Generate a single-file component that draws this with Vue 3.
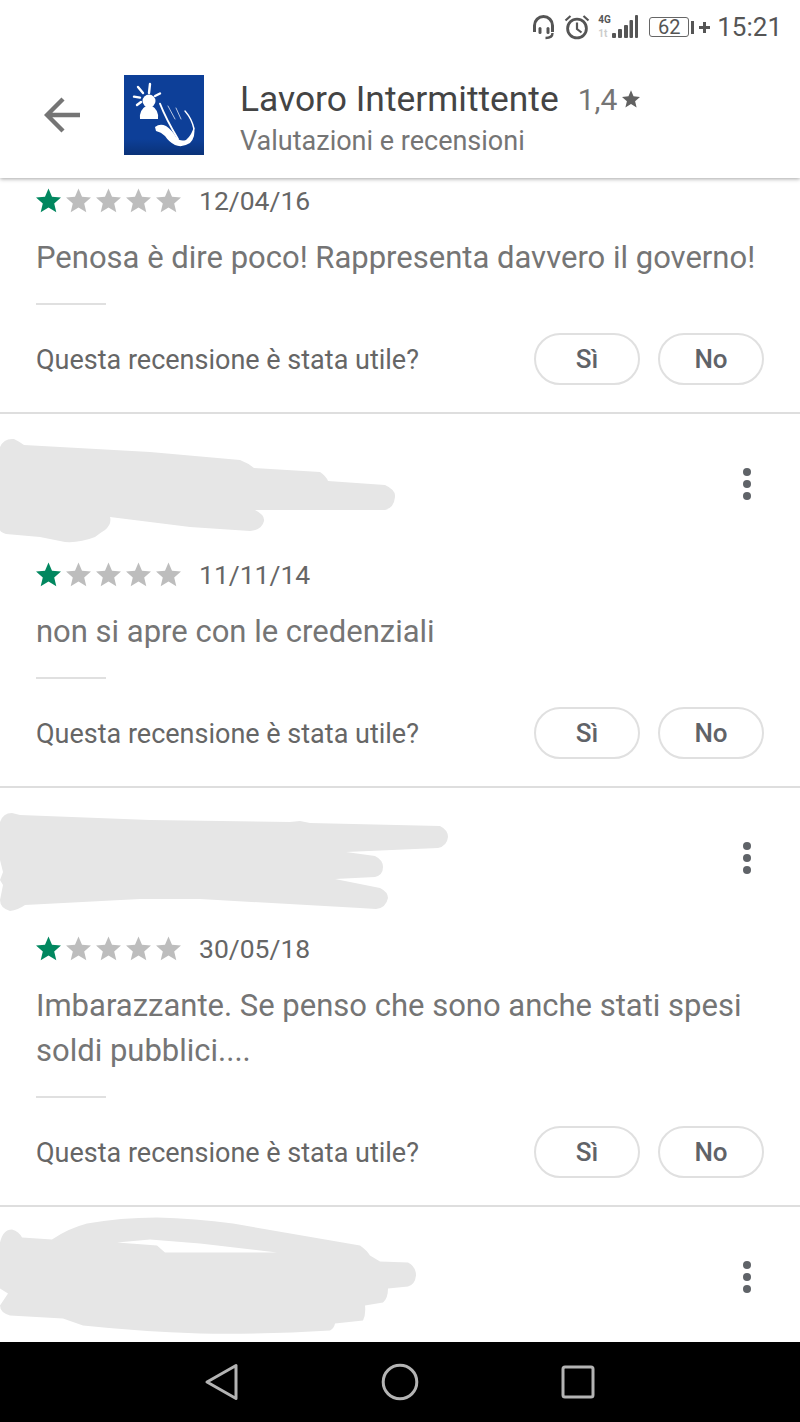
<script setup>
const reviews = [
  { id: 1, date: '12/04/16', lines: 'Penosa è dire poco! Rappresenta davvero il governo!' },
  {
    id: 2,
    date: '11/11/14',
    lines: 'non si apre con le credenziali',
    viewBox: '0 414 400 140',
    width: 400,
    blot: 'M0 447Q4 438 14 439Q20 442 24 445L150 452L240 460Q248 463 254 468L320 472Q326 476 328 481L385 485Q396 490 395 497Q394 508 385 510L255 510Q265 515 264 521Q262 530 250 531L190 527L110 517Q112 524 105 530Q100 533 95 537Q80 543 65 542L40 537L6 534Q0 532 0 530Z'
  },
  {
    id: 3,
    date: '30/05/18',
    lines: 'Imbarazzante. Se penso che sono anche stati spesi soldi pubblici....',
    viewBox: '0 788 460 140',
    width: 460,
    blot: 'M0 822Q3 813 12 813L20 815L150 820L290 822L300 821L310 823L440 826Q448 830 448 837Q447 846 438 848L346 852L375 856Q383 860 383 867Q383 875 375 877L335 879L380 888Q388 892 388 898Q386 908 376 909L360 908L200 899L140 899L25 905Q18 910 10 911Q0 908 0 900L3 885L0 880L3 872L0 860Z'
  },
  {
    id: 4,
    date: '',
    lines: '',
    viewBox: '0 1206.500 440 140',
    width: 440,
    blot: 'M0 1242Q3 1229 12 1229Q19 1231 22 1237L52 1239Q68 1228 87 1223Q120 1217 157 1217Q195 1218 233 1223L360 1245Q367 1250 370 1255L380 1261L408 1262Q416 1266 416 1275Q415 1284 408 1286L388 1288Q388 1298 383 1302L365 1305Q366 1314 363 1320L335 1323Q334 1328 330 1330Q265 1334 200 1333Q140 1331 83 1325L63 1318L10 1315Q0 1312 0 1305L8 1293L0 1288ZM117 1242L150 1239L200 1243L277 1252L165 1252L157 1245Z'
  }
]
const star = 'M12.5 0.5L16 8.8L25 9.6L18.2 15.5L20.3 24.3L12.5 19.6L4.7 24.3L6.8 15.5L0 9.6L9 8.8Z'
</script>

<template>
  <div class="screen">
    <header class="appbar">
      <div class="status">
        <svg class="ic-head" width="24" height="26" viewBox="0 0 24 26" fill="none" stroke="#555" stroke-width="3">
          <path d="M2.500 18V11.500a9 9 0 0 1 18 0V18" />
          <path d="M20.500 19c0 3-2 5-7 5" stroke-width="2.400" />
          <rect x="6.500" y="13" width="3" height="7" rx="1.500" fill="#555" stroke="none" />
          <rect x="14.500" y="13" width="3" height="7" rx="1.500" fill="#555" stroke="none" />
        </svg>
        <svg class="ic-alarm" width="26" height="26" viewBox="0 0 26 26" fill="none" stroke="#555" stroke-width="2.800">
          <circle cx="13" cy="14.500" r="9.400" />
          <path d="M13 8.500V15l4.500 3.500" stroke-width="2.200" />
          <path d="M1.500 6.500L6.500 2M24.500 6.500L19.500 2" stroke-width="2.200" />
        </svg>
        <div class="net">
          <span class="net-4g">4G</span>
          <span class="net-1">1t</span>
        </div>
        <svg class="ic-signal" width="26" height="24" viewBox="0 0 26 24" fill="#555">
          <rect x="0" y="18" width="4" height="5" rx="1" />
          <rect x="6" y="14" width="4" height="9" rx="1" />
          <rect x="12" y="10" width="4" height="13" rx="1" />
          <rect x="17.500" y="5" width="3.500" height="18" rx="1" />
          <rect x="23" y="0" width="3" height="23" rx="1" />
        </svg>
        <div class="battery"><span>62</span></div>
        <i class="nub"></i>
        <svg class="ic-plus" width="11" height="11" viewBox="0 0 11 11" fill="#555">
          <path d="M4 0h3v4h4v3H7v4H4V7H0V4h4z" />
        </svg>
        <span class="time">15:21</span>
      </div>
      <div class="titlebar">
        <svg class="back" width="38" height="38" viewBox="0 0 38 38" fill="none" stroke="#757575" stroke-width="4.400">
          <path d="M36 19H4M19 3L3 19l16 16" />
        </svg>
        <svg class="logo" width="80" height="80" viewBox="0 0 80 80">
          <defs>
            <linearGradient id="logoBg" x1="0" y1="0" x2="0" y2="1">
              <stop offset="0.800" stop-color="#0d3f98" />
              <stop offset="1" stop-color="#0a3278" />
            </linearGradient>
          </defs>
          <rect width="80" height="80" fill="url(#logoBg)" />
          <g fill="#fff" stroke="none">
            <circle cx="25" cy="26" r="6.500" />
            <path d="M16 44Q15 35 22 31H28Q35 35 34 44Z" />
            <path d="M31 52Q36 48 42 51Q48 55 52 62Q56 67 62 65Q68 60 70 51Q72 62 66 68Q58 73 51 70Q45 67 41 61Q37 57 32 56Z" />
          </g>
          <g fill="none" stroke="#fff" stroke-linecap="round">
            <path d="M14 12L19 18M26 9L25 18M36 18.500L31 21M10 21.600L16 22.600M13 30L17 27" stroke-width="2.400" />
            <path d="M36 28.600Q42 44 54 64" stroke-width="1.800" />
            <path d="M61 36Q68 44 70 54" stroke-width="1.400" />
            <path d="M44 31L51 44M52 33L57 44" stroke-width="1" stroke-opacity="0.700" />
          </g>
        </svg>
        <div class="titles">
          <div class="title-row">
            <span class="title">Lavoro Intermittente</span>
            <span class="rating">1,4</span>
            <svg width="18" height="18" viewBox="0 0 25 25" fill="#616161"><path :d="star" /></svg>
          </div>
          <div class="subtitle">Valutazioni e recensioni</div>
        </div>
      </div>
    </header>

    <main class="list">
      <article v-for="r in reviews" :key="r.id" class="card" :class="{ first: r.id === 1 }">
        <div v-if="r.blot" class="head">
          <svg :width="r.width" height="140" :viewBox="r.viewBox"><path :d="r.blot" fill="#e6e6e6" fill-rule="evenodd" /></svg>
          <div class="kebab"><i></i><i></i><i></i></div>
        </div>
        <template v-if="r.date">
          <div class="meta">
            <svg v-for="n in 5" :key="n" width="25" height="25" viewBox="0 0 25 25" :fill="n === 1 ? '#01875f' : '#bdbdbd'"><path :d="star" /></svg>
            <span class="date">{{ r.date }}</span>
          </div>
          <p class="body">{{ r.lines }}</p>
          <div class="rule"></div>
          <div class="actions">
            <span class="question">Questa recensione è stata utile?</span>
            <span class="btn">Sì</span>
            <span class="btn">No</span>
          </div>
        </template>
      </article>
    </main>

    <nav class="navbar">
      <svg width="40" height="40" viewBox="0 0 40 40" fill="none" stroke="#b4b4b4" stroke-width="3" stroke-linejoin="round"><path d="M34 3.500V36.500L5 20Z" /></svg>
      <svg width="40" height="40" viewBox="0 0 40 40" fill="none" stroke="#b4b4b4" stroke-width="3"><circle cx="20" cy="20" r="16.800" /></svg>
      <svg width="40" height="40" viewBox="0 0 40 40" fill="none" stroke="#b4b4b4" stroke-width="3" stroke-linejoin="round"><rect x="5" y="5" width="30" height="30" rx="2" /></svg>
    </nav>
  </div>
</template>

<style scoped>
.screen {
  width: 800px;
  height: 1422px;
  display: flex;
  flex-direction: column;
  overflow: hidden;
  background: #fff;
  font-family: Roboto, "Liberation Sans", sans-serif;
  color: #5f6368;
}
.appbar {
  height: 178px;
  flex: none;
  background: #fff;
  box-shadow: 0 1px 4px rgba(0, 0, 0, 0.35);
  position: relative;
  z-index: 2;
}
.status {
  height: 54px;
  display: flex;
  align-items: center;
  justify-content: flex-end;
  padding-right: 18px;
  color: #555;
}
.ic-head { margin-right: 8px; }
.ic-alarm { margin-right: 8px; }
.net {
  width: 14px;
  height: 24px;
  display: flex;
  flex-direction: column;
  justify-content: space-between;
  font-size: 10px;
  line-height: 10px;
  font-weight: 700;
}
.net-1 { color: #ccc; }
.ic-signal { margin-right: 11px; }
.battery {
  width: 40px;
  height: 20px;
  box-sizing: border-box;
  border: 1.500px solid #666;
  border-radius: 3px;
  display: flex;
  align-items: center;
  justify-content: center;
  font-size: 20px;
}
.nub {
  width: 3px;
  height: 13px;
  margin: 0 5px 0 2px;
  background: #555;
}
.ic-plus { margin-right: 7px; }
.time {
  font-size: 26px;
  color: #555;
}
.titlebar {
  height: 122px;
  display: flex;
  align-items: center;
  padding-left: 44px;
  box-sizing: border-box;
}
.logo { margin-left: 42px; }
.titles { margin-left: 36px; }
.title-row {
  display: flex;
  align-items: center;
  height: 52px;
}
.title {
  font-size: 35.400px;
  color: #444;
}
.rating {
  font-size: 30px;
  margin-left: 19px;
  margin-right: 5px;
  color: #757575;
}
.subtitle {
  font-size: 27px;
  line-height: 32px;
  color: #757575;
}
.list {
  flex: 1;
  min-height: 0;
  overflow: hidden;
}
.card {
  border-bottom: 2px solid #dedede;
}
.card.first { padding-top: 2px; }
.card:last-child { border-bottom: 0; }
.head {
  height: 140px;
  display: flex;
  justify-content: space-between;
  align-items: center;
  padding-right: 49px;
}
.kebab {
  display: flex;
  flex-direction: column;
  gap: 4px;
}
.kebab i {
  width: 8px;
  height: 8px;
  border-radius: 50%;
  background: #5f6368;
}
.meta {
  height: 40px;
  padding-left: 36px;
  display: flex;
  align-items: center;
  gap: 5px;
}
.date {
  margin-left: 13px;
  font-size: 26.500px;
  color: #666;
}
.body {
  margin: 16px 0 0;
  padding: 0 36px;
  font-size: 31px;
  line-height: 44.500px;
  color: #757575;
}
.rule {
  width: 70px;
  height: 2px;
  margin: 22.500px 0 0 36px;
  background: #e0e0e0;
}
.actions {
  margin-top: 28px;
  padding: 0 36px 27px;
  display: flex;
  align-items: center;
  gap: 18px;
}
.question {
  flex: 1;
  padding-top: 2px;
  font-size: 27px;
  color: #666;
}
.btn {
  width: 106px;
  height: 52px;
  box-sizing: border-box;
  border: 2px solid #e0e0e0;
  border-radius: 26px;
  display: flex;
  align-items: center;
  justify-content: center;
  font-size: 26px;
  font-weight: 500;
  color: #5f6368;
}
.navbar {
  height: 80px;
  flex: none;
  background: #000;
  display: flex;
  align-items: center;
  justify-content: center;
  gap: 138px;
}
</style>

<style>
body { background: #fff; }
</style>
